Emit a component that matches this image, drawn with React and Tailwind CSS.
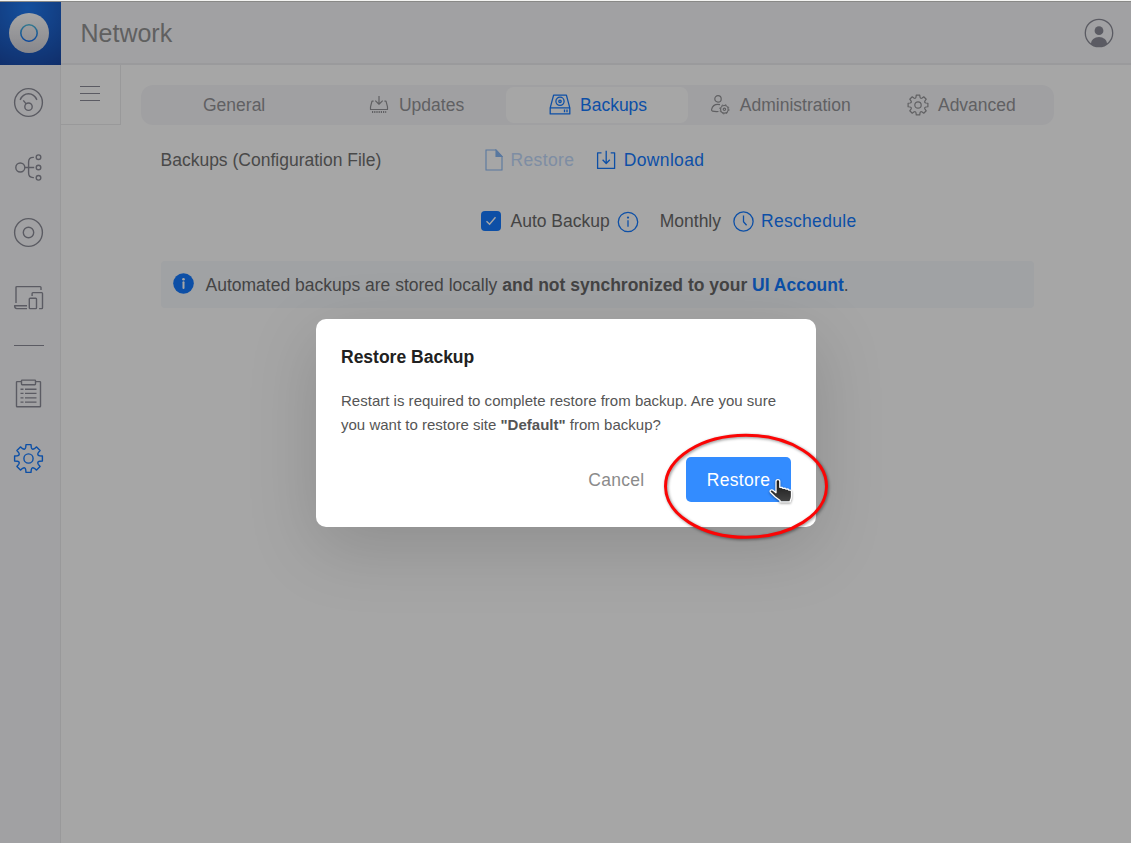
import React from "react";

// Eight-toothed gear: straight tooth flanks joined by concave valleys.
function gearPath(c, outer, shoulder, valley, top, base) {
  let d = "";
  const rot = (x, y, a) =>
    `${(c + x * Math.cos(a) - y * Math.sin(a)).toFixed(2)} ${(c + x * Math.sin(a) + y * Math.cos(a)).toFixed(2)}`;
  for (let i = 0; i < 8; i++) {
    const a = (i * Math.PI) / 4;
    const next = a + Math.PI / 4;
    d += `${i ? "L" : "M"}${rot(-base, -shoulder, a)}`;
    d += `L${rot(-top, -outer, a)}L${rot(top, -outer, a)}L${rot(base, -shoulder, a)}`;
    d += `Q${rot(0, -valley, a + Math.PI / 8)} ${rot(-base, -shoulder, next)}`;
  }
  return `${d}Z`;
}

function Svg({ w, h = w, sw = 1.3, className = "", children }) {
  return (
    <svg
      width={w}
      height={h}
      viewBox={`0 0 ${w} ${h}`}
      fill="none"
      stroke="currentColor"
      strokeWidth={sw}
      strokeLinejoin="round"
      className={`shrink-0 ${className}`}
    >
      {children}
    </svg>
  );
}

function NavSvg({ children }) {
  return (
    <svg
      width="29"
      height="29"
      viewBox="0.5 0.5 29 29"
      fill="none"
      stroke="currentColor"
      strokeWidth="1.4"
      strokeLinejoin="round"
      className="shrink-0 overflow-visible"
    >
      {children}
    </svg>
  );
}

const GaugeIcon = () => (
  <NavSvg>
    <circle cx="15" cy="15" r="13.9" />
    <path d="M6.6 12.4C8.3 8.6 11.4 6.3 15 6.3s6.7 2.3 8.4 6.1" />
    <circle cx="15" cy="19.2" r="3.7" />
    <path d="M12.6 16.4 9.8 12.9" />
  </NavSvg>
);

const TopologyIcon = () => (
  <NavSvg>
    <circle cx="6.8" cy="15" r="4.5" />
    <path d="M11.3 15h9.4M20.4 4.9h-.8q-4.5 0-4.5 4.5v11.2q0 4.5 4.5 4.5h.8" />
    <circle cx="25" cy="4.7" r="2.3" />
    <circle cx="25" cy="15" r="2.3" />
    <circle cx="25" cy="25.3" r="2.3" />
  </NavSvg>
);

const DeviceIcon = () => (
  <NavSvg>
    <circle cx="15" cy="15" r="13.9" />
    <circle cx="15" cy="15" r="5.2" />
  </NavSvg>
);

const ClientsIcon = () => (
  <NavSvg>
    <path d="M2.5 20.6V5q0-.9.9-.9h23.2q.9 0 .9.9v2.6" />
    <path d="M13.5 26.1H3.3Q1.1 26.1 1.1 23.3h12.4" />
    <rect x="15.8" y="15.7" width="7.2" height="10.4" rx=".8" />
    <path d="M18.6 13.4v-2.5q0-.8.8-.8h8.8q.8 0 .8.8v14.4q0 .8-.8.8h-2.6" />
  </NavSvg>
);

const ClipboardIcon = () => (
  <NavSvg>
    <path d="M8.2 3.1H3.6q-.6 0-.6.6v24q0 .6.6.6h22.8q.6 0 .6-.6v-24q0-.6-.6-.6h-4.6" />
    <rect x="8" y="1.6" width="14" height="4.6" rx=".6" />
    <path d="M7 10.7h3M11.5 10.7h11.5M7 14.9h3M11.5 14.9h11.5M7 19.4h3M11.5 19.4h11.5M7 23.6h3M11.5 23.6h11.5" />
  </NavSvg>
);

const GearIcon = () => (
  <NavSvg>
    <path d={gearPath(15, 13.9, 11.1, 8.9, 2.5, 2.8)} />
    <circle cx="15" cy="15" r="4.6" />
  </NavSvg>
);

const SmallGearIcon = () => (
  <Svg w={22} sw={1.2}>
    <path d={gearPath(11, 9.9, 7.9, 6.5, 1.75, 2)} />
    <circle cx="11" cy="11" r="3.2" />
  </Svg>
);

const UpdatesIcon = () => (
  <Svg w={20} sw={1.2}>
    <path d="M4.6 6.2H3L1.5 11.8v2.7h17v-2.7L17 6.2h-1.6" />
    <path d="M10 1v8M6.3 5.6 10 9.2l3.7-3.6" />
    <path d="M3 16.9h14.2" strokeWidth="2" strokeDasharray="1.2 1" />
  </Svg>
);

const DriveIcon = () => (
  <Svg w={22} sw={1.3}>
    <path d="M4.6 1.1h12.8l3.4 12.7v6.1H1.2v-6.1zM1.2 13.9h19.6" />
    <circle cx="11" cy="7.3" r="4.1" />
    <circle cx="11" cy="7.3" r="1.2" />
    <path d="M15.5 15.4v2.8M18 15.4v2.8" />
  </Svg>
);

const AdminIcon = () => (
  <Svg w={20} sw={1.2}>
    <circle cx="8" cy="3.9" r="3.2" />
    <path d="M10 9.6c-4.3-.8-7.5 1.2-8.4 4.8-.2.9.1 1.5.9 1.7 1.6.5 3.8.5 6 .4" />
    <circle cx="14.4" cy="14.3" r="3.8" />
    <circle cx="14.4" cy="14.3" r="4.6" strokeWidth="1" strokeDasharray="1.7 1.91" />
    <circle cx="14.4" cy="14.3" r="1.2" />
  </Svg>
);

const navTop = [GaugeIcon, TopologyIcon, DeviceIcon, ClientsIcon];

function NavItem({ children, active }) {
  return (
    <div
      className={`flex h-[65px] w-[57px] items-center justify-center ${
        active ? "text-[#006fff]" : "text-[#82838f]"
      }`}
    >
      {children}
    </div>
  );
}

function Sidebar() {
  return (
    <nav className="w-[61px] shrink-0 border-r border-[#e9e9ec] bg-[#f7f7fa] pt-[5px]">
      {navTop.map((Icon, i) => (
        <NavItem key={i}>
          <Icon />
        </NavItem>
      ))}
      <div className="flex h-[31px] items-center pl-3.5">
        <div className="h-px w-[30px] bg-[#82838f]" />
      </div>
      <NavItem>
        <ClipboardIcon />
      </NavItem>
      <NavItem active>
        <GearIcon />
      </NavItem>
    </nav>
  );
}

function Header() {
  return (
    <header className="flex h-[63px] shrink-0">
      <div className="flex w-[61px] items-center justify-center bg-[radial-gradient(circle_at_45%_10%,#0d6ff0,#06389c)] pr-[3px] pb-0.5">
        <div className="flex size-10 items-center justify-center rounded-full bg-linear-to-b from-white to-[#ccccd4]">
          <svg width="20" height="20" viewBox="0 0 20 20" fill="none">
            <defs>
              <linearGradient id="ring" x1="0" y1="0" x2="0" y2="1">
                <stop offset="0" stopColor="#3fb2d8" />
                <stop offset="1" stopColor="#0062ee" />
              </linearGradient>
            </defs>
            <circle cx="10" cy="10" r="8.2" stroke="url(#ring)" strokeWidth="1.6" />
          </svg>
        </div>
      </div>
      <div className="flex flex-1 items-center justify-between border-b-2 border-[#ececef] bg-[#f7f7fa] pr-[17px] pl-[19.5px]">
        <h1 className="text-[25px] leading-8 text-[#8a8a8a]">Network</h1>
        <svg width="30" height="30" viewBox="0 0 30 30" className="relative top-[0.5px] text-[#82838f]">
          <clipPath id="avatar">
            <circle cx="15" cy="15" r="13.8" />
          </clipPath>
          <circle cx="15" cy="15" r="13.7" fill="none" stroke="currentColor" strokeWidth="1.3" />
          <circle cx="15" cy="12.7" r="4.4" fill="currentColor" />
          <ellipse cx="15" cy="26" rx="8.2" ry="7" fill="currentColor" clipPath="url(#avatar)" />
        </svg>
      </div>
    </header>
  );
}

function Tab({ icon, label, className = "" }) {
  return (
    <div className={`flex h-full w-[182.6px] items-center text-[#8b8b8f] ${className}`}>
      {icon}
      <span>{label}</span>
    </div>
  );
}

function Tabs() {
  return (
    <div className="flex h-10 w-[913px] rounded-xl bg-[#f6f6f9]">
      <Tab label="General" className="pl-[62px]" />
      <Tab icon={<UpdatesIcon />} label="Updates" className="gap-[10px] pl-[45.4px]" />
      <div className="h-full w-[182.6px] py-0.5">
        <Tab
          icon={<DriveIcon />}
          label="Backups"
          className="w-[182px]! gap-[9px] rounded-lg bg-white pl-[42.8px] text-[#006fff]!"
        />
      </div>
      <Tab icon={<AdminIcon />} label="Administration" className="gap-[9.5px] pl-[21.5px]" />
      <Tab icon={<SmallGearIcon />} label="Advanced" className="gap-[9px] pl-[35.6px]" />
    </div>
  );
}

function ConfigRow() {
  return (
    <div className="flex h-[30px] items-center pl-[19.5px]">
      <span className="w-[324px] text-[#646464]">Backups (Configuration File)</span>
      <span className="flex items-center text-[#bcd6fb]">
        <svg width="18" height="22" viewBox="0 0 18 22" fill="none" stroke="#7fb2f4" strokeWidth="1.1">
          <path d="M1 1h10l6 6.5V21H1z" />
          <path d="M11 1v6.5h6z" fill="#7fb2f4" />
        </svg>
        <span className="ml-2 tracking-[0.35px]">Restore</span>
      </span>
      <span className="ml-[22px] flex items-center text-[#006fff]">
        <Svg w={20} sw={1.3}>
          <path d="M5.5 2.8H1.6v15.6h17V2.8h-3.9" />
          <path d="M10.2.8v12.6M6.6 9.8l3.6 3.7 3.6-3.7" />
        </Svg>
        <span className="ml-[7.5px] tracking-[0.35px]">Download</span>
      </span>
    </div>
  );
}

function ScheduleRow() {
  return (
    <div className="mt-[31px] flex h-[30px] items-center pl-[340px] text-[#5c5c5c]">
      <div className="flex size-5 items-center justify-center rounded bg-[#006fff]">
        <svg width="14" height="12" viewBox="0 0 14 12" fill="none" stroke="white" strokeWidth="1.4">
          <path d="M2.5 6.2 5.6 9.2 11.5 2.3" />
        </svg>
      </div>
      <span className="ml-[9.5px]">Auto Backup</span>
      <Svg w={22} sw={1.3} className="relative top-[1px] ml-[7px] text-[#006fff]">
        <circle cx="11" cy="11" r="9.7" />
        <path d="M11 9.2v6.6" />
        <circle cx="11" cy="6.6" r=".5" />
      </Svg>
      <span className="ml-[21px]">Monthly</span>
      <span className="ml-3 flex items-center text-[#006fff]">
        <Svg w={21} sw={1.3}>
          <circle cx="10.5" cy="10.5" r="9.6" />
          <path d="M10.5 4.5V10.8l3.1 3.4" />
        </Svg>
        <span className="ml-[7px] tracking-[0.3px]">Reschedule</span>
      </span>
    </div>
  );
}

function Notice() {
  return (
    <div className="mt-[25px] ml-[19.5px] flex h-[47px] w-[873px] items-center rounded bg-[#f5f8fc] pl-3 text-[#5c5c5c]">
      <svg width="21" height="21" viewBox="0 0 21 21" className="relative top-[-1px] shrink-0">
        <circle cx="10.5" cy="10.5" r="10.3" fill="#006fff" />
        <circle cx="10.5" cy="6.3" r="1.3" fill="white" />
        <path d="M10.5 9.3v5.7" stroke="white" strokeWidth="2" strokeLinecap="round" />
      </svg>
      <span className="ml-3 pt-px">
        Automated backups are stored locally{" "}
        <b>
          and not synchronized to your <span className="text-[#006fff]">UI Account</span>
        </b>
        .
      </span>
    </div>
  );
}

function Dialog() {
  return (
    <div className="absolute top-[318px] left-[316px] flex h-[208px] w-[500px] flex-col rounded-[10px] bg-white px-[25px] pt-[25px] shadow-[0_20px_70px_rgba(0,0,0,0.15)]">
      <h2 className="text-[17.5px] leading-[26px] font-bold text-[#212121]">Restore Backup</h2>
      <p className="mt-[19px] text-[15px] leading-6 tracking-[0.01px] text-[#555555]">
        Restart is required to complete restore from backup. Are you sure
        <br />
        you want to restore site <b>"Default"</b> from backup?
      </p>
      <div className="mt-5 flex items-center justify-end gap-[41.5px] tracking-[0.3px]">
        <span className="text-[#8b8b8b]">Cancel</span>
        <span className="flex h-[45px] w-[105px] items-center justify-center rounded-[5px] bg-[#338cff] text-white">
          Restore
        </span>
      </div>
    </div>
  );
}

function Pointer() {
  return (
    <svg
      width="190"
      height="130"
      viewBox="655 425 190 130"
      className="absolute top-[424px] left-[655px]"
      fill="none"
    >
      <defs>
        <linearGradient id="hand" x1="0" y1="0" x2="0" y2="1">
          <stop offset="0" stopColor="#161616" />
          <stop offset="1" stopColor="#444444" />
        </linearGradient>
      </defs>
      <ellipse
        cx="746"
        cy="486.3"
        rx="80.5"
        ry="51"
        stroke="#fb0505"
        strokeWidth="3"
        className="[filter:drop-shadow(1.5px_1.5px_1.5px_rgba(0,0,0,0.45))]"
      />
      <path
        d="M776 481.6c0-1.3.8-2 1.9-2s1.9.7 1.9 2v5.7l2.4.2.7.9 2.2-.2.8 1 2.1-.2.8 1.1h1.4q1.3.2 1.3 1.7v4.4q0 2.5-1.2 4.3v1.3H780v-1.3l-5-3.8-4.6-4.5c-.6-.8-.3-1.9.6-2.2 1-.3 2 .2 2.9 1l2.1 1.7z"
        fill="url(#hand)"
        stroke="white"
        strokeWidth="1.3"
        strokeLinejoin="round"
        className="[filter:drop-shadow(0.5px_1px_1px_rgba(0,0,0,0.4))]"
      />
    </svg>
  );
}

export default function App() {
  return (
    <div className="flex h-[843px] w-[1131px] flex-col overflow-hidden bg-white font-['Liberation_Sans',Arial,sans-serif] text-[17.5px] leading-6">
      <div className="h-px shrink-0 bg-[#f4f4f2]" />
      <div className="relative flex flex-1 flex-col">
        <div className="h-px shrink-0 bg-[#cfcfcc]" />
        <Header />
        <div className="flex flex-1">
          <Sidebar />
          <div className="flex size-[60px] shrink-0 flex-col items-center justify-center gap-1.5 border-r border-b border-[#e9e9ec] pr-0.5 pb-0.5">
            <div className="h-px w-5 bg-[#82838f]" />
            <div className="h-px w-5 bg-[#82838f]" />
            <div className="h-px w-5 bg-[#82838f]" />
          </div>
          <main className="flex flex-1 flex-col pt-5 pl-5">
            <Tabs />
            <div className="h-5" />
            <ConfigRow />
            <ScheduleRow />
            <Notice />
          </main>
        </div>
        <div className="absolute inset-0 bg-[rgba(33,33,33,0.4)]" />
        <Dialog />
        <Pointer />
      </div>
    </div>
  );
}
